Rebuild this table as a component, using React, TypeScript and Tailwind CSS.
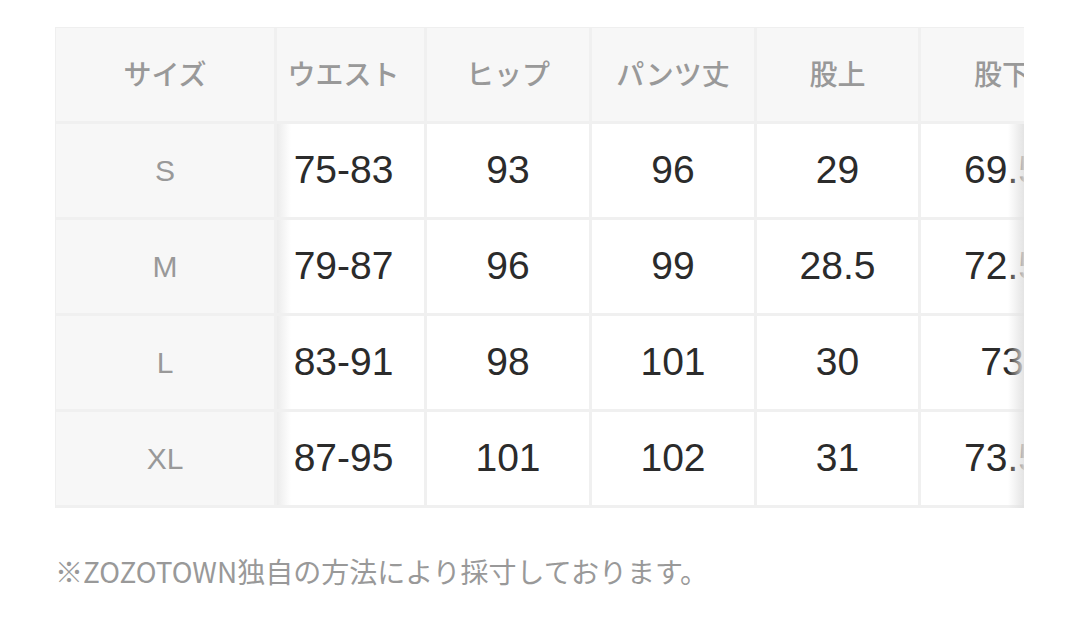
import React from "react";

const headers = ["サイズ", "ウエスト", "ヒップ", "パンツ丈", "股上", "股下"];
const rows: string[][] = [
  ["S", "75-83", "93", "96", "29", "69.5"],
  ["M", "79-87", "96", "99", "28.5", "72.5"],
  ["L", "83-91", "98", "101", "30", "73"],
  ["XL", "87-95", "101", "102", "31", "73.5"],
];

const jp = { fontFamily: '"Noto Sans CJK JP", "Noto Sans", sans-serif' };
const num = { fontFamily: '"Liberation Sans", Arial, sans-serif' };

export default function App() {
  return (
    <div className="w-[1080px] h-[637px] bg-white overflow-hidden">
      <div className="relative ml-[55px] mt-[27px] w-[969px] overflow-hidden border-l border-t border-[#efefef]">
        <div className="grid grid-cols-[218px_147px_162px_162px_161px_162px] auto-rows-[93px] gap-[3px] bg-[#f0f0f0] w-max pb-[3px]">
          {headers.map((h, i) => (
            <div
              key={h}
              style={jp}
              className={`bg-[#f7f7f7] flex items-center justify-center pb-[3px] text-[28px] font-medium text-[#999999] ${i === 1 ? "pr-[14px]" : ""}`}
            >
              {h}
            </div>
          ))}
          {rows.map((r) =>
            r.map((c, i) => (
              <div
                key={r[0] + i}
                style={num}
                className={
                  i === 0
                    ? "bg-[#f7f7f7] flex items-center justify-center text-[30px] text-[#999999]"
                    : i === 1
                    ? "bg-[linear-gradient(to_right,#ececec,#ffffff_14px)] flex items-center justify-center pr-[14px] text-[39px] text-[#2b2b2b]"
                    : "bg-white flex items-center justify-center text-[39px] text-[#2b2b2b]"
                }
              >
                {c}
              </div>
            ))
          )}
        </div>
        <div className="absolute right-0 top-[96px] bottom-0 w-[16px] bg-[linear-gradient(to_right,rgba(255,255,255,0),rgba(225,225,225,0.9))]" />
      </div>
      <div style={jp} className="ml-[55px] mt-[43px] text-[28px] leading-[40px] text-[#999999]">
        ※ZOZOTOWN独自の方法により採寸しております。
      </div>
    </div>
  );
}
